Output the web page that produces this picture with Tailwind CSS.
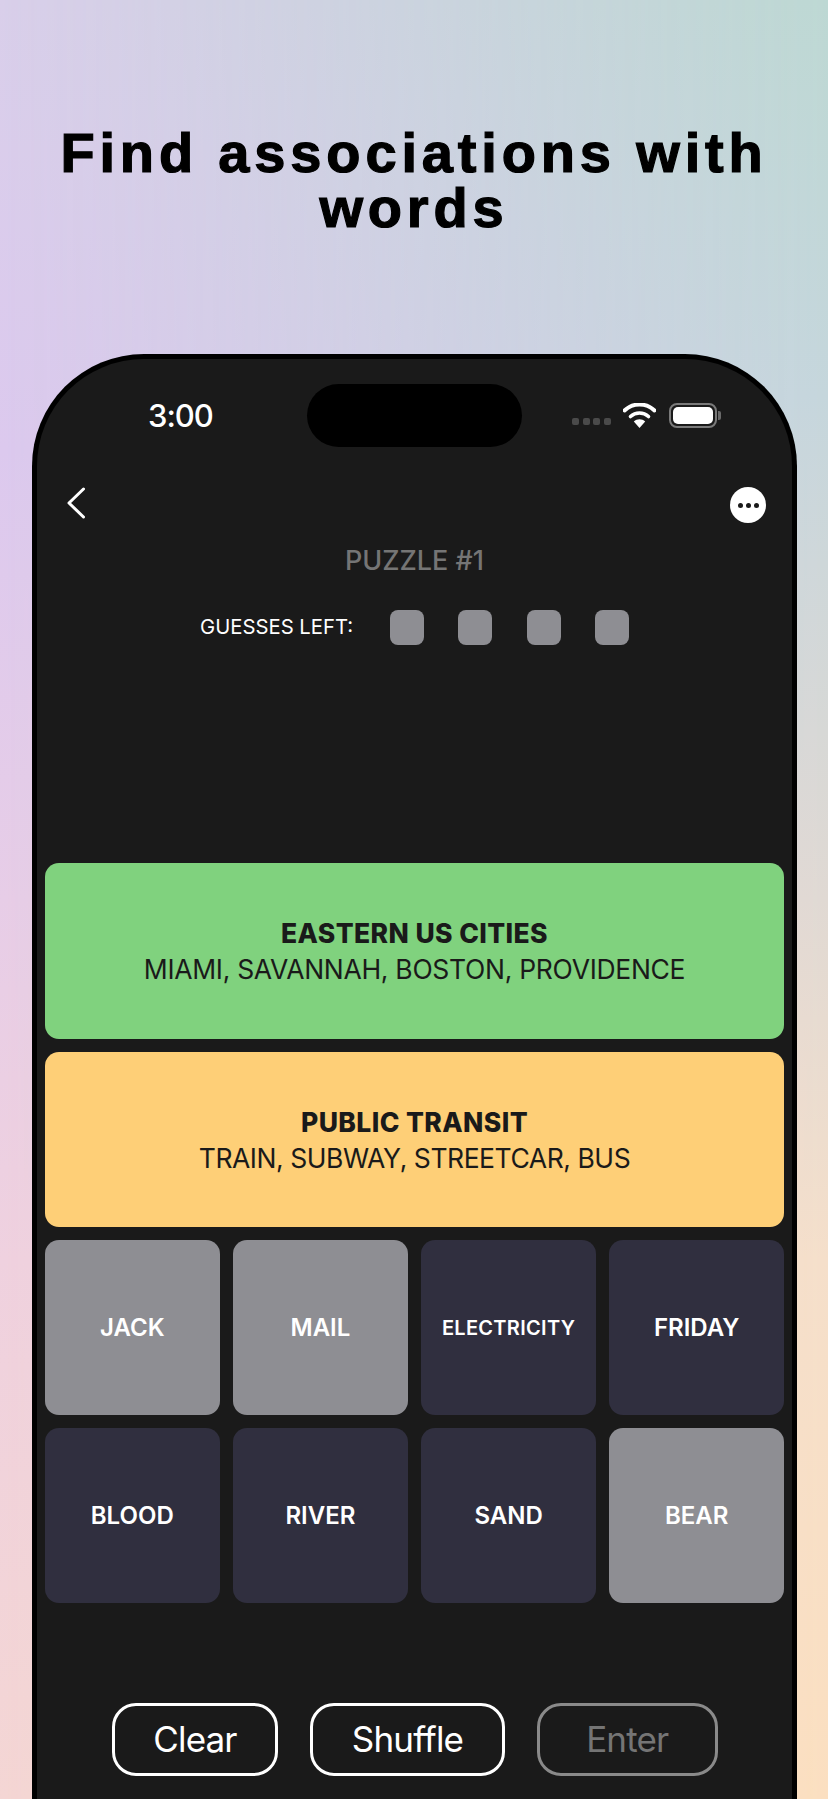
<!DOCTYPE html>
<html lang="en">
<head>
  <meta charset="UTF-8" />
  <title>Find associations with words</title>
  <script src="https://cdn.jsdelivr.net/npm/@tailwindcss/browser@4"></script>
</head>
<body class="font-['Inter',sans-serif]">
  <div class="relative w-[828px] h-[1799px] overflow-hidden bg-[linear-gradient(to_bottom,#d9cfea_0%,#dcc9ee_25%,#e7cde7_50%,#efd1df_70%,#f4d6d4_100%)]">
    <!-- right side of the backdrop, faded in across the width -->
    <div class="absolute inset-0 bg-[linear-gradient(to_bottom,#bdd8d3_0%,#c5d6dc_22%,#e0d9d3_50%,#f5dfca_70%,#fbdfc0_100%)] [mask-image:linear-gradient(to_right,transparent,black)]"></div>

    <div class="relative">
      <h1 class="pt-[125px] h-[354px] text-center font-['Liberation_Sans',sans-serif] text-[56px] leading-[55px] font-bold tracking-[4.85px] text-black [-webkit-text-stroke:1.2px_black]">Find associations with<br />words</h1>

      <!-- Phone -->
      <div class="ml-[32px] mr-[31px] h-[1445px] rounded-t-[112px] border-[5px] border-b-0 border-black bg-[#1a1a1a]">
        <!-- Status bar -->
        <div class="flex items-center h-[63px] mt-[25px] pl-[111px]">
          <span class="w-[158.5px] pt-[2px] text-[31px] font-medium tracking-[-1px] text-white">3:00</span>
          <div class="w-[215.5px] h-[63px] rounded-full bg-black"></div>
          <div class="flex items-center ml-[50px] pb-[1px]">
            <div class="flex gap-[3.5px] mt-[13px]">
              <span class="w-[7px] h-[7px] rounded-[2px] bg-[#4a4a4a]"></span>
              <span class="w-[7px] h-[7px] rounded-[2px] bg-[#4a4a4a]"></span>
              <span class="w-[7px] h-[7px] rounded-[2px] bg-[#4a4a4a]"></span>
              <span class="w-[7px] h-[7px] rounded-[2px] bg-[#4a4a4a]"></span>
            </div>
            <svg class="ml-[12px] w-[33px] h-[25px]" viewBox="0 0 33 25" fill="none">
              <path d="M1.5 7.5C10 -0.5 23 -0.5 31.5 7.5" stroke="#fff" stroke-width="4" stroke-linecap="round" />
              <path d="M7.5 13.5C12.5 8.8 20.5 8.8 25.5 13.5" stroke="#fff" stroke-width="3.6" stroke-linecap="round" />
              <path d="M16.5 25L10.8 18.6C14 15.6 19 15.6 22.2 18.6Z" fill="#fff" />
            </svg>
            <div class="relative ml-[13px] w-[48px] h-[25px] rounded-[8px] border-2 border-[#7a7a7a] p-[2px]">
              <div class="h-full rounded-[5px] bg-white"></div>
              <div class="absolute right-[-6px] top-[6px] w-[3px] h-[9px] rounded-r-[2px] bg-[#6a6a6a]"></div>
            </div>
          </div>
        </div>

        <!-- Nav -->
        <div class="flex items-center justify-between h-[36px] mt-[40px] pl-[29px] pr-[26px]">
          <svg class="w-[20px] h-[32px] -mt-[5px]" viewBox="0 0 20 32" fill="none">
            <path d="M17.5 2L3 16L17.5 30" stroke="#fff" stroke-width="3" stroke-linecap="round" stroke-linejoin="round" />
          </svg>
          <div class="flex items-center justify-center gap-[3px] w-[36px] h-[36px] rounded-full bg-white">
            <span class="w-[5px] h-[5px] rounded-full bg-[#1a1a1a]"></span>
            <span class="w-[5px] h-[5px] rounded-full bg-[#1a1a1a]"></span>
            <span class="w-[5px] h-[5px] rounded-full bg-[#1a1a1a]"></span>
          </div>
        </div>

        <p class="mt-[18px] text-center text-[27px] leading-[40px] font-medium text-[#757575]">PUZZLE #1</p>

        <!-- Guesses -->
        <div class="flex items-center h-[35px] mt-[29px] pl-[163px]">
          <span class="w-[190px] text-[20.3px] text-white">GUESSES LEFT:</span>
          <div class="flex gap-[34.3px]">
            <span class="w-[34px] h-[35px] rounded-[8px] bg-[#8e8e93]"></span>
            <span class="w-[34px] h-[35px] rounded-[8px] bg-[#8e8e93]"></span>
            <span class="w-[34px] h-[35px] rounded-[8px] bg-[#8e8e93]"></span>
            <span class="w-[34px] h-[35px] rounded-[8px] bg-[#8e8e93]"></span>
          </div>
        </div>

        <!-- Board -->
        <div class="mt-[218px] mx-[8px] flex flex-col gap-[13px]">
          <div class="flex flex-col items-center justify-center h-[176px] rounded-[14px] bg-[#80d27e] text-[#1a1a1a]">
            <span class="text-[26.5px] leading-[36px] font-extrabold tracking-[0.4px]">EASTERN US CITIES</span>
            <span class="text-[26.5px] leading-[36px] tracking-[-0.3px]">MIAMI, SAVANNAH, BOSTON, PROVIDENCE</span>
          </div>
          <div class="flex flex-col items-center justify-center h-[175px] rounded-[14px] bg-[#fecf77] text-[#1a1a1a]">
            <span class="text-[26.5px] leading-[36px] font-extrabold tracking-[0.4px]">PUBLIC TRANSIT</span>
            <span class="text-[26.5px] leading-[36px] tracking-[-0.45px]">TRAIN, SUBWAY, STREETCAR, BUS</span>
          </div>
          <div class="grid grid-cols-4 gap-x-[13.6px] gap-y-[13px] text-white font-semibold">
            <div class="flex items-center justify-center h-[175px] rounded-[14px] bg-[#8e8e93] text-[24px]">JACK</div>
            <div class="flex items-center justify-center h-[175px] rounded-[14px] bg-[#8e8e93] text-[24px]">MAIL</div>
            <div class="flex items-center justify-center h-[175px] rounded-[14px] bg-[#302f3f] text-[20px] tracking-[0.3px]">ELECTRICITY</div>
            <div class="flex items-center justify-center h-[175px] rounded-[14px] bg-[#302f3f] text-[24px]">FRIDAY</div>
            <div class="flex items-center justify-center h-[175px] rounded-[14px] bg-[#302f3f] text-[24px]">BLOOD</div>
            <div class="flex items-center justify-center h-[175px] rounded-[14px] bg-[#302f3f] text-[24px]">RIVER</div>
            <div class="flex items-center justify-center h-[175px] rounded-[14px] bg-[#302f3f] text-[24px]">SAND</div>
            <div class="flex items-center justify-center h-[175px] rounded-[14px] bg-[#8e8e93] text-[24px]">BEAR</div>
          </div>
        </div>

        <!-- Controls -->
        <div class="flex mt-[100px] pl-[75px] gap-[32px] text-[35px] tracking-[-0.85px]">
          <div class="flex items-center justify-center w-[166px] h-[73px] rounded-[24px] border-[3px] border-white text-white">Clear</div>
          <div class="flex items-center justify-center w-[195px] h-[73px] rounded-[24px] border-[3px] border-white text-white">Shuffle</div>
          <div class="flex items-center justify-center w-[180.5px] h-[73px] rounded-[24px] border-[3px] border-[#8a8a8a] text-[#757575]">Enter</div>
        </div>
      </div>
    </div>
  </div>
</body>
</html>
